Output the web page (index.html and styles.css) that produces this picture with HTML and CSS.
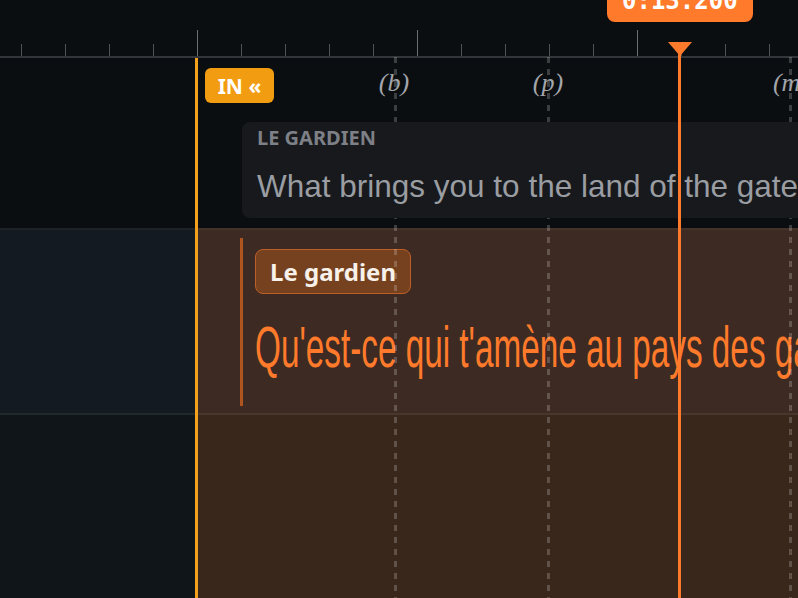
FILE: index.html
```html
<!DOCTYPE html>
<html lang="fr">
<head>
<meta charset="utf-8">
<title>Timeline</title>
<link rel="stylesheet" href="styles.css">
</head>
<body>
<div class="timeline">
  <div class="ruler">
    <div class="ticks">
      <span class="tick"></span><span class="tick"></span><span class="tick"></span><span class="tick"></span>
      <span class="tick major"></span><span class="tick"></span><span class="tick"></span><span class="tick"></span><span class="tick"></span>
      <span class="tick major"></span><span class="tick"></span><span class="tick"></span><span class="tick"></span><span class="tick"></span>
      <span class="tick major"></span><span class="tick"></span><span class="tick"></span><span class="tick"></span>
    </div>
  </div>

  <div class="track track-source">
    <div class="cue-card">
      <div class="speaker">LE GARDIEN</div>
      <div class="source-line">What brings you to the land of the gatekeepers?</div>
    </div>
  </div>

  <div class="track track-target">
    <div class="cue-edit">
      <span class="speaker-chip">Le gardien</span>
      <div class="translation">Qu'est-ce qui t'amène au pays des gardiens ?</div>
    </div>
  </div>

  <div class="track track-empty"></div>

  <div class="selection"></div>

  <div class="phoneme-line" style="left:394px"></div>
  <div class="phoneme-line" style="left:547px"></div>
  <div class="phoneme-line" style="left:789px"></div>

  <span class="phoneme" style="left:394px">(b)</span>
  <span class="phoneme" style="left:548px">(p)</span>
  <span class="phoneme" style="left:791px">(m)</span>

  <div class="in-line"></div>
  <div class="in-badge">IN «</div>

  <div class="time-badge">0:13.200</div>
  <div class="playhead-head"></div>
  <div class="playhead-line"></div>
</div>
</body>
</html>
```

FILE: styles.css
```css
html, body {
  margin: 0;
  padding: 0;
  background: #0b0e11;
}

.timeline {
  position: relative;
  width: 798px;
  height: 598px;
  overflow: hidden;
  background: #0b0e11;
  font-family: "Noto Sans", "Open Sans", sans-serif;
}

/* Ruler */
.ruler {
  height: 56px;
  border-bottom: 2px solid #33363a;
}

.ticks {
  display: flex;
  align-items: flex-end;
  height: 56px;
  padding-left: 21px;
  box-sizing: border-box;
}

.tick {
  flex: none;
  width: 44px;
  height: 12px;
  box-sizing: border-box;
  border-left: 1px solid #4e5156;
}

.tick.major {
  height: 26px;
  border-left-color: #6a6d72;
}

/* Tracks */
.track-source {
  height: 170px;
  box-sizing: border-box;
  padding: 64px 0 0 242px;
}

.cue-card {
  position: relative;
  z-index: 4;
  width: 700px;
  height: 96px;
  box-sizing: border-box;
  padding: 4px 0 0 15px;
  background: #17191c;
  border-radius: 8px;
}

.speaker {
  font-weight: 700;
  font-size: 20px;
  line-height: 24px;
  color: #7d8086;
}

.source-line {
  margin-top: 18px;
  font-family: "Liberation Sans", Arial, sans-serif;
  font-size: 31.5px;
  line-height: 36px;
  color: #9a9da2;
  white-space: nowrap;
}

.track-target {
  height: 185px;
  box-sizing: border-box;
  border-top: 2px solid #1c2226;
  background: #131a21;
  padding: 8px 0 0 240px;
}

.cue-edit {
  position: relative;
  z-index: 2;
  height: 168px;
  box-sizing: border-box;
  border-left: 3px solid #b0551f;
  padding: 11px 0 0 12px;
}

.speaker-chip {
  display: inline-flex;
  align-items: center;
  height: 45px;
  box-sizing: border-box;
  padding: 0 14px;
  border: 1.5px solid #bd5e28;
  border-radius: 8px;
  background: #76411f;
  color: #f7f1ea;
  font-weight: 700;
  font-size: 24px;
}

.translation {
  margin-top: 24px;
  font-family: "Liberation Sans", Arial, sans-serif;
  font-size: 58px;
  line-height: 58px;
  color: #ff7a2a;
  white-space: nowrap;
  transform: scaleX(0.574);
  transform-origin: left center;
}

.track-empty {
  height: 185px;
  box-sizing: border-box;
  border-top: 2px solid #22292b;
  background: #0f1519;
}

/* Selection region from IN point */
.selection {
  position: absolute;
  z-index: 1;
  left: 196px;
  top: 228px;
  right: 0;
  bottom: 0;
  background: rgba(255, 122, 42, 0.18);
}

/* Phoneme markers */
.phoneme-line {
  position: absolute;
  z-index: 3;
  top: 57px;
  bottom: 0;
  width: 3px;
  background: repeating-linear-gradient(to bottom,
    rgba(255, 255, 255, 0.2) 0 6px,
    transparent 6px 12px);
}

.phoneme {
  position: absolute;
  z-index: 4;
  top: 67px;
  transform: translateX(-50%);
  font-family: "Liberation Serif", "Times New Roman", serif;
  font-style: italic;
  font-size: 26px;
  line-height: 32px;
  color: #a3a6ab;
  white-space: nowrap;
}

/* IN marker */
.in-line {
  position: absolute;
  z-index: 5;
  left: 195px;
  top: 58px;
  bottom: 0;
  width: 3px;
  background: #f3a01c;
}

.in-badge {
  position: absolute;
  z-index: 5;
  left: 205px;
  top: 68px;
  width: 69px;
  height: 35px;
  display: flex;
  align-items: center;
  justify-content: center;
  border-radius: 6px;
  background: #f29c12;
  color: #ffffff;
  font-weight: 700;
  font-size: 21px;
}

/* Playhead */
.time-badge {
  position: absolute;
  z-index: 6;
  left: 607px;
  top: -17px;
  padding: 6px 15px 9px;
  border-radius: 8px;
  background: #ff7a2a;
  color: #ffffff;
  font-family: "DejaVu Sans Mono", "Liberation Mono", monospace;
  font-weight: 700;
  font-size: 24px;
  line-height: 24px;
  white-space: nowrap;
}

.playhead-head {
  position: absolute;
  z-index: 6;
  left: 668px;
  top: 42px;
  width: 0;
  height: 0;
  border-left: 12px solid transparent;
  border-right: 12px solid transparent;
  border-top: 14px solid #ff7a2a;
}

.playhead-line {
  position: absolute;
  z-index: 6;
  left: 678px;
  top: 54px;
  bottom: 0;
  width: 3px;
  background: #ff7a2a;
}
```
